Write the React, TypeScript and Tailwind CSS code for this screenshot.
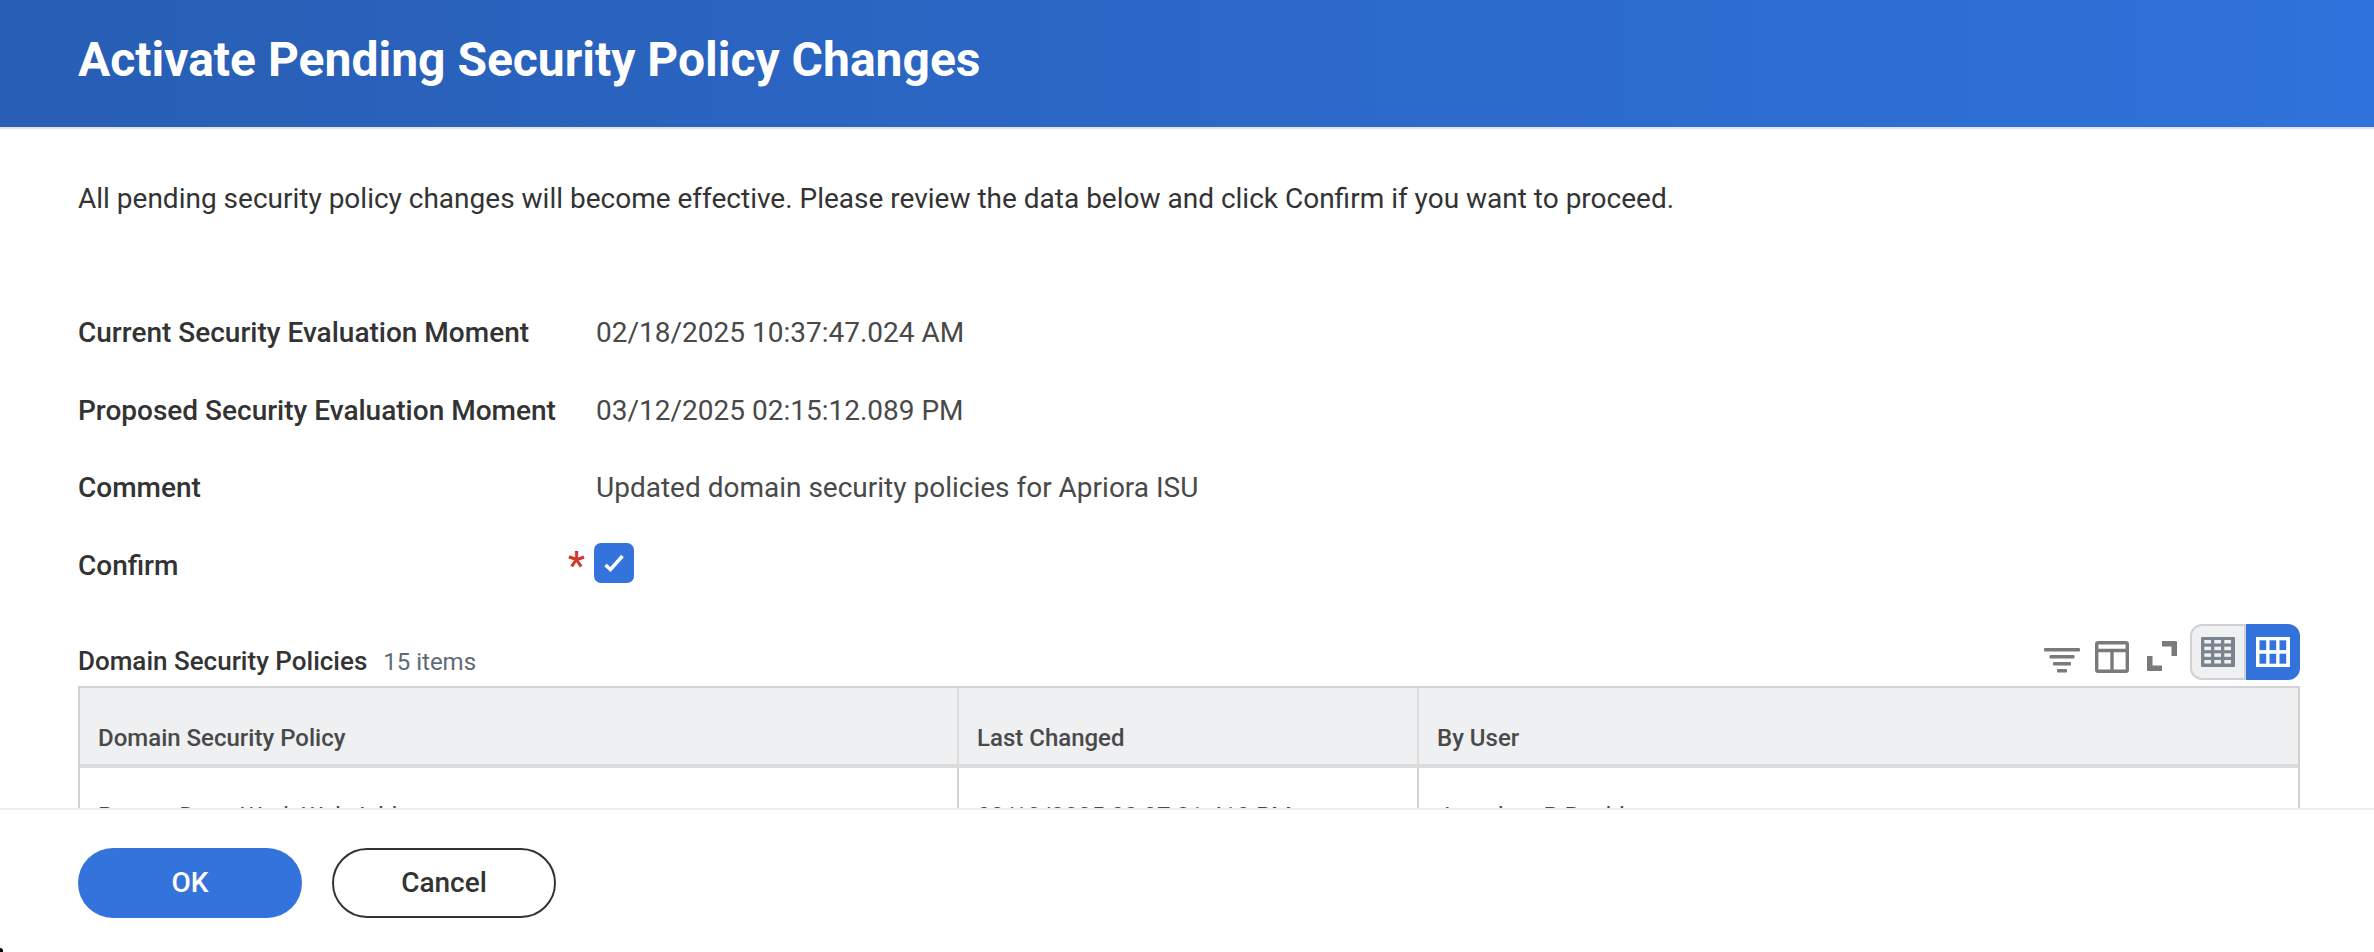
const font = "font-['Roboto',sans-serif]";

const details = [
  { label: "Current Security Evaluation Moment", value: "02/18/2025 10:37:47.024 AM" },
  { label: "Proposed Security Evaluation Moment", value: "03/12/2025 02:15:12.089 PM" },
  { label: "Comment", value: "Updated domain security policies for Apriora ISU" },
];

function FilterIcon() {
  return (
    <svg width="36" height="26" viewBox="0 0 36 26" fill="#7a7a7a">
      <rect x="0" y="0" width="36" height="3.4" rx="1" />
      <rect x="5.5" y="7" width="25" height="3.4" rx="1" />
      <rect x="9" y="14" width="18" height="3.4" rx="1" />
      <rect x="13" y="21" width="10" height="3.4" rx="1" />
    </svg>
  );
}

function LayoutIcon() {
  return (
    <svg width="34" height="32" viewBox="0 0 34 32" fill="none" stroke="#7a7a7a" strokeWidth="3.4">
      <rect x="1.7" y="1.7" width="30.6" height="28.6" rx="1.5" />
      <path d="M1.7 9.5H32.3M17 9.5V30.3" />
    </svg>
  );
}

function ExpandIcon() {
  return (
    <svg width="30" height="30" viewBox="0 0 30 30" fill="#7a7a7a">
      <path d="M15 0H29a1 1 0 0 1 1 1V15H24.500V5.500H15Z" />
      <path d="M0 15H5.500V24.500H15V30H1a1 1 0 0 1-1-1Z" />
    </svg>
  );
}

function DenseGridIcon() {
  const cells = [];
  for (let r = 0; r < 4; r++) {
    for (let c = 0; c < 3; c++) {
      cells.push(<rect key={`${r}-${c}`} x={3.3 + c * 10} y={3 + r * 6.67} width="6.700" height="3.500" fill="#eff0f2" />);
    }
  }
  return (
    <svg width="34" height="30" viewBox="0 0 34 30">
      <rect width="34" height="30" rx="1" fill="#7b838c" />
      {cells}
    </svg>
  );
}

function GridIcon() {
  return (
    <svg width="34" height="30" viewBox="0 0 34 30" fill="#3573dc">
      <rect width="34" height="30" fill="#fff" />
      <rect x="3.500" y="3.300" width="6.700" height="9.800" />
      <rect x="13.500" y="3.300" width="6.700" height="9.800" />
      <rect x="23.500" y="3.300" width="6.700" height="9.800" />
      <rect x="3.500" y="16.700" width="6.700" height="10" />
      <rect x="13.500" y="16.700" width="6.700" height="10" />
      <rect x="23.500" y="16.700" width="6.700" height="10" />
    </svg>
  );
}

export default function App() {
  return (
    <div className={`${font} relative flex h-[952px] w-[2374px] flex-col overflow-hidden bg-white`}>
      <header className="flex h-[129px] shrink-0 items-center border-b-2 border-[#e1e4e8] bg-gradient-to-r from-[#285eb4] to-[#2f72db] pb-[7px] pl-[78px]">
        <h1 className="text-[48px] font-bold leading-none text-white">Activate Pending Security Policy Changes</h1>
      </header>

      <main className="flex min-h-0 flex-1 flex-col overflow-hidden pl-[78px] pr-[74px]">
        <p className="mt-[54px] shrink-0 text-[28px] leading-[32px] text-[#333]">
          All pending security policy changes will become effective. Please review the data below and click Confirm if you want to proceed.
        </p>

        <div className="mt-[102px] flex shrink-0 flex-col gap-[45.67px]">
          {details.map((d) => (
            <div key={d.label} className="flex h-[32px] items-center text-[28px]">
              <div className="w-[518px] font-medium text-[#333]">{d.label}</div>
              <div className="text-[#494949]">{d.value}</div>
            </div>
          ))}
          <div className="flex h-[32px] items-center text-[28px]">
            <div className="w-[490px] font-medium text-[#333]">Confirm</div>
            <span className="w-[26px] text-[38px] font-medium leading-none text-[#d0382b]">*</span>
            <span className="mb-[6px] flex h-[40px] w-[40px] items-center justify-center rounded-[7px] bg-[#3573dc]">
              <svg width="24" height="24" viewBox="0 0 24 24" fill="none" stroke="#fff" strokeWidth="3.500">
                <path d="M3.500 14L8.500 18.500L20.500 5" />
              </svg>
            </span>
          </div>
        </div>

        <div className="mt-[42px] flex h-[62px] shrink-0 items-start justify-between">
          <div className="mt-[18px] flex items-baseline gap-[16px]">
            <span className="text-[26px] font-medium text-[#333]">Domain Security Policies</span>
            <span className="text-[24px] text-[#5e6a75]">15 items</span>
          </div>
          <div className="flex items-start">
            <div className="mt-[24px] mr-[15px]"><FilterIcon /></div>
            <div className="mt-[17px] mr-[18px]"><LayoutIcon /></div>
            <div className="mt-[17px] mr-[13px]"><ExpandIcon /></div>
            <div className="flex h-[56px] w-[56px] items-center justify-center rounded-l-[12px] border-2 border-r-2 border-[#ced1d5] bg-[#eff0f2]"><DenseGridIcon /></div>
            <div className="flex h-[56px] w-[54px] items-center justify-center rounded-r-[12px] bg-[#3573dc]"><GridIcon /></div>
          </div>
        </div>

        <div className="grid shrink-0 grid-cols-[877px_460px_1fr] border-x-2 border-t-2 border-[#d2d2d2] text-[24px]">
          <div className="flex h-[80px] items-end border-b-4 border-[#dcdcdc] bg-[#eff0f2] pb-[8px] pl-[18px] font-medium text-[#494949]">Domain Security Policy</div>
          <div className="flex h-[80px] items-end border-b-4 border-l-2 border-[#dcdcdc] bg-[#eff0f2] pb-[8px] pl-[18px] font-medium text-[#494949]">Last Changed</div>
          <div className="flex h-[80px] items-end border-b-4 border-l-2 border-[#dcdcdc] bg-[#eff0f2] pb-[8px] pl-[18px] font-medium text-[#494949]">By User</div>
          <div className="h-[80px] pl-[18px] pt-[30px] text-[#494949]">Person Data: Work Web Address</div>
          <div className="h-[80px] border-l-2 border-[#d2d2d2] pl-[18px] pt-[30px] text-[#494949]">03/13/2025 02:37:21.413 PM</div>
          <div className="h-[80px] border-l-2 border-[#d2d2d2] pl-[18px] pt-[30px] text-[#494949]">Jonathan B Roehl</div>
        </div>
      </main>

      <footer className="flex h-[144px] shrink-0 items-start gap-[30px] border-t-2 border-[#eeeeee] bg-white pl-[78px] pt-[38px]">
        <button className="h-[70px] w-[224px] rounded-full bg-[#3573dc] text-[28px] font-medium text-white">OK</button>
        <button className="h-[70px] w-[224px] rounded-full border-2 border-[#333] text-[28px] font-medium text-[#333]">Cancel</button>
      </footer>

      {/* window corner showing at the bottom left of the capture */}
      <div className="absolute bottom-0 left-0 h-[4px] w-[3px] rounded-tr-[3px] bg-black" />
    </div>
  );
}
